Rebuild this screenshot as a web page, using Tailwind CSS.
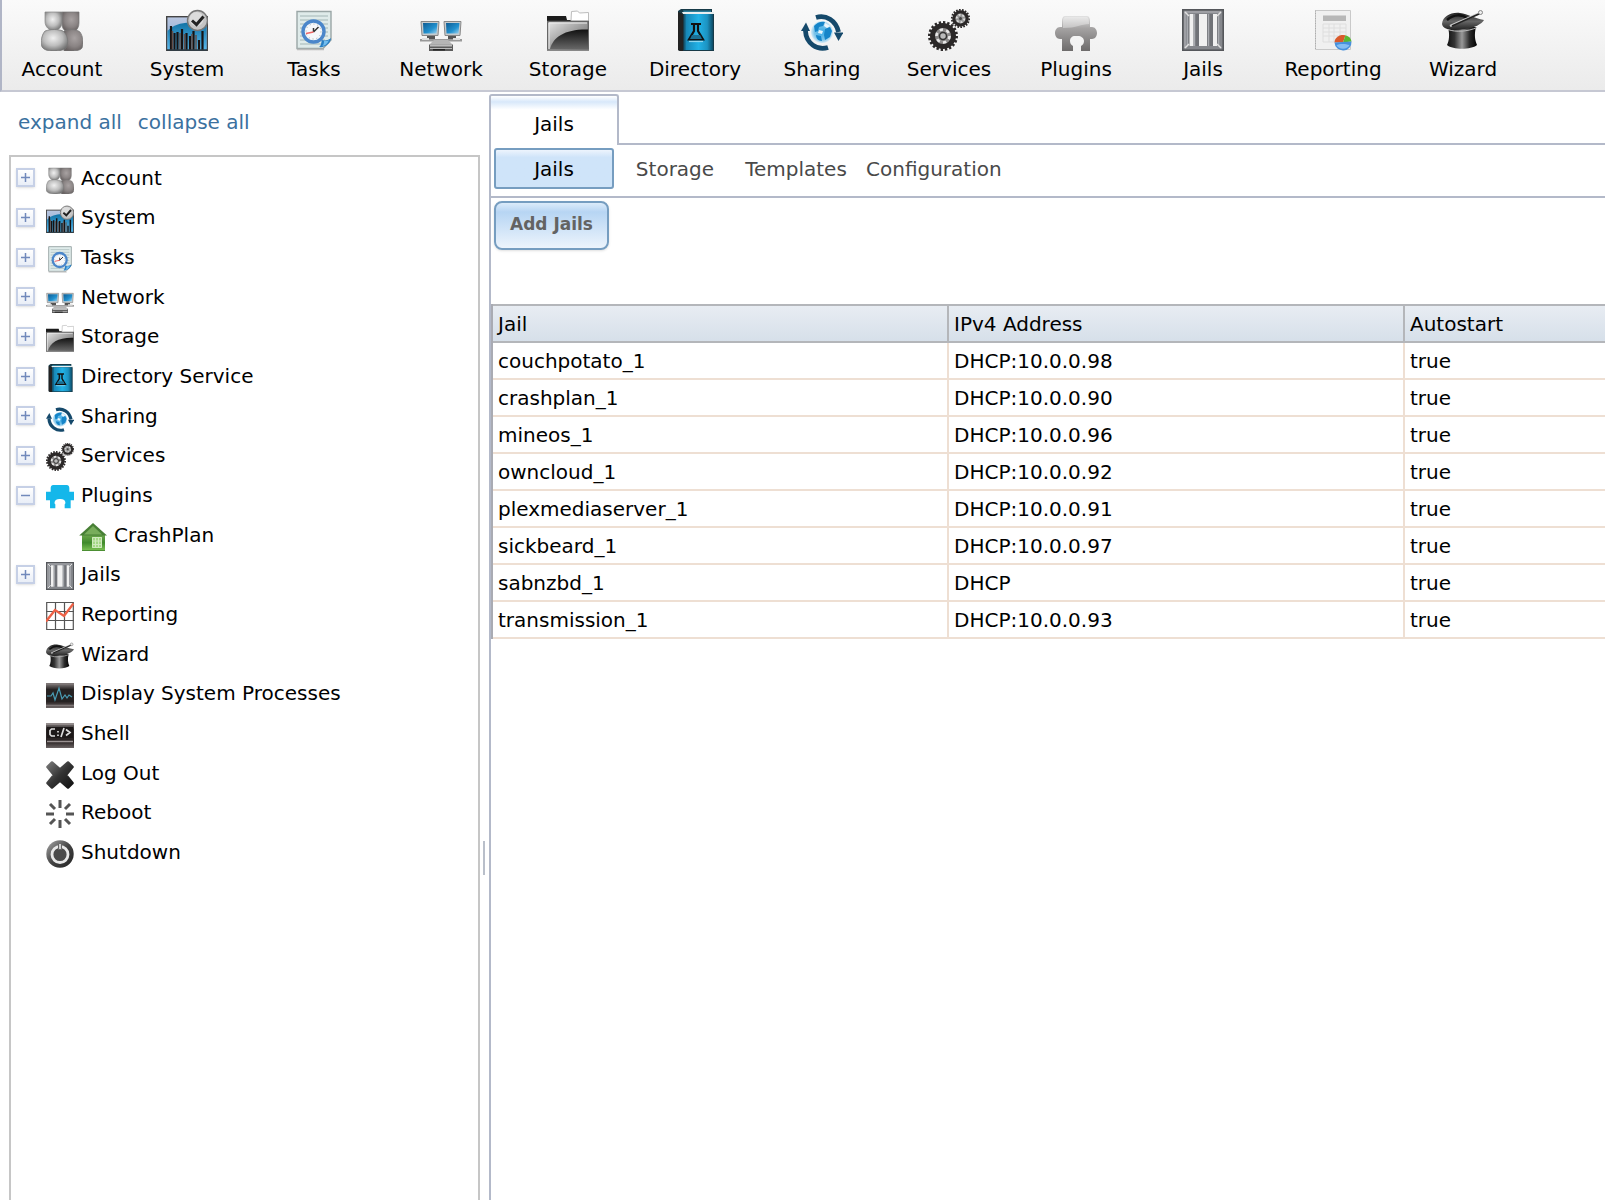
<!DOCTYPE html>
<html lang="en">
<head>
  <meta charset="UTF-8" />
  <meta name="viewport" content="width=device-width, initial-scale=1" />
  <title>Jails</title>
  <script src="https://cdn.jsdelivr.net/npm/@tailwindcss/browser@4"></script>
</head>
<body class="flex flex-col h-screen overflow-hidden bg-white text-black text-[20px] leading-6 font-['DejaVu_Sans',sans-serif]">

  <!-- Icon sprite -->
  <svg class="absolute w-0 h-0" aria-hidden="true">
    <defs>
      <radialGradient id="gLight" cx=".45" cy=".4" r=".65"><stop offset="0" stop-color="#f0f0f0"/><stop offset=".55" stop-color="#bdbdbd"/><stop offset="1" stop-color="#6e6e6e"/></radialGradient>
      <radialGradient id="gDark" cx=".55" cy=".4" r=".65"><stop offset="0" stop-color="#a8a2a2"/><stop offset=".6" stop-color="#8a8484"/><stop offset="1" stop-color="#666060"/></radialGradient>
      <linearGradient id="gSys" x1="0" y1="0" x2="0" y2="1"><stop offset="0" stop-color="#b9c6e0"/><stop offset="1" stop-color="#7fa6d4"/></linearGradient>
      <linearGradient id="gHill" x1="0" y1="0" x2="0" y2="1"><stop offset="0" stop-color="#1173a6"/><stop offset="1" stop-color="#58b8ec"/></linearGradient>
      <linearGradient id="gScreen" x1="0" y1="0" x2="1" y2="1"><stop offset="0" stop-color="#0e5c93"/><stop offset=".6" stop-color="#2191cf"/><stop offset="1" stop-color="#9fd4ef"/></linearGradient>
      <linearGradient id="gFolder" x1="0" y1="0" x2="1" y2="1"><stop offset="0" stop-color="#e6e6e6"/><stop offset="1" stop-color="#555"/></linearGradient>
      <linearGradient id="gFolderDark" x1="0" y1="0" x2="0" y2="1"><stop offset="0" stop-color="#111"/><stop offset="1" stop-color="#666"/></linearGradient>
      <linearGradient id="gBook" x1="0" y1="0" x2="1" y2="0"><stop offset="0" stop-color="#157fae"/><stop offset=".5" stop-color="#22b2e6"/><stop offset=".8" stop-color="#1c93c2"/><stop offset="1" stop-color="#0d4a64"/></linearGradient>
      <radialGradient id="gGlobe"><stop offset="0" stop-color="#35a9e6"/><stop offset=".7" stop-color="#7cc4ea"/><stop offset="1" stop-color="#d5eaf5"/></radialGradient>
      <linearGradient id="gPlug" x1="0" y1="0" x2="0" y2="1"><stop offset="0" stop-color="#e2e2e2"/><stop offset=".35" stop-color="#a5a3a3"/><stop offset="1" stop-color="#6d6b6b"/></linearGradient>
      <linearGradient id="gHat" x1="0" y1="0" x2="1" y2="0"><stop offset="0" stop-color="#111"/><stop offset=".25" stop-color="#333"/><stop offset=".5" stop-color="#999"/><stop offset=".75" stop-color="#2b2b2b"/><stop offset="1" stop-color="#000"/></linearGradient>
      <linearGradient id="gBrim" x1="0" y1="0" x2="0" y2="1"><stop offset="0" stop-color="#222"/><stop offset=".5" stop-color="#666"/><stop offset="1" stop-color="#222"/></linearGradient>
      <linearGradient id="gHouse" x1="0" y1="0" x2="0" y2="1"><stop offset="0" stop-color="#6aa54a"/><stop offset=".5" stop-color="#3f8a2b"/><stop offset="1" stop-color="#7cc254"/></linearGradient>
      <linearGradient id="gTerm" x1="0" y1="0" x2="0" y2="1"><stop offset="0" stop-color="#8a8484"/><stop offset=".25" stop-color="#2a2626"/><stop offset=".75" stop-color="#2b2424"/><stop offset="1" stop-color="#6b6464"/></linearGradient>
      <linearGradient id="gCross" x1="0" y1="0" x2="1" y2="1"><stop offset="0" stop-color="#777"/><stop offset=".5" stop-color="#333"/><stop offset="1" stop-color="#111"/></linearGradient>
      <linearGradient id="gPower" x1="0" y1="0" x2="1" y2="1"><stop offset="0" stop-color="#aaa"/><stop offset=".5" stop-color="#444"/><stop offset="1" stop-color="#222"/></linearGradient>
    </defs>

    <symbol id="account" viewBox="0 0 42 42">
      <path d="M21 3h17v11c0 4-2 7-4 8h-9c-3-1-4-4-4-8z" fill="url(#gDark)" stroke="#777" stroke-width=".7"/>
      <path d="M23 22c5-2 12-2 16 1 3 4 4 12 2 16-2 3-8 3-12 3h-6z" fill="url(#gDark)" stroke="#777" stroke-width=".7"/>
      <path d="M4 3h17v10c0 5-3 8-8 8.500s-9-4-9-9z" fill="url(#gLight)" stroke="#888" stroke-width=".7"/>
      <path d="M4 22c6-2 13-2 18 0 5 4 6 12 3 17-3 3-9 3-13 3-5 0-9-1-11-4-2-5 0-13 3-16z" fill="url(#gLight)" stroke="#777" stroke-width=".7"/>
    </symbol>

    <symbol id="system" viewBox="0 0 42 42">
      <rect x=".7" y="7.700" width="40.600" height="33.600" fill="url(#gSys)" stroke="#444" stroke-width="1.400"/>
      <path d="M1.500 22C10 13 24 12 40.500 16v25h-39z" fill="url(#gHill)"/>
      <path d="M5 17v24M8.500 24v17M11.500 23v18M16 20v21M20.500 24v17M24 27v14M27.500 22v19M33 31v10M36.500 22v19" stroke="#171313" stroke-width="2.200"/>
      <path d="M6.500 22v19M14 24v17M18.500 25v16M26 25v16M30 26v15" stroke="#64504b" stroke-width="1.500"/>
      <path d="M1 41h40" stroke="#2c3b44" stroke-width="1.600"/>
      <circle cx="31.500" cy="11.500" r="10" fill="#c4c4c4" stroke="#777" stroke-width="1.400"/>
      <circle cx="30.500" cy="10" r="7" fill="#dcdcdc"/>
      <path d="M26 11.500l4.500 4 7-8" fill="none" stroke="#222" stroke-width="3"/>
    </symbol>

    <symbol id="tasks" viewBox="0 0 42 42">
      <path d="M4 2.500h34V31l-8 8.500H4z" fill="#dfebea" stroke="#9aa6a6" stroke-width="1.400"/>
      <path d="M4 40.500h27" stroke="#bbb" stroke-width="1.500"/>
      <path d="M7 7h28M7 11h28M7 15h28M7 19h28M7 23h28M7 27h28M7 31h25M7 35h22" stroke="#a3b6b6"/>
      <circle cx="20.500" cy="22.500" r="10.500" fill="#f6f8fb" stroke="#4a86ca" stroke-width="3.400"/>
      <circle cx="20.500" cy="22.500" r="7.500" fill="none" stroke="#9aa" stroke-width="1" stroke-dasharray="1 2.900"/>
      <path d="M20.500 23l5-5M20.500 23v-4" stroke="#333" stroke-width="1.500"/>
      <path d="M13 24.500l7.500-1.500" stroke="#e66" stroke-width="1.500"/>
      <path d="M26 38c3-2 2-6 3-7 3 1 7 0 9-2 0 5-6 10-12 9z" fill="#2a7fc4"/>
      <path d="M29 37c2-1 2-4 2-5 2 0 4 0 5-1-1 3-4 6-7 6z" fill="#72bdee"/>
    </symbol>

    <symbol id="network" viewBox="0 0 42 42">
      <path d="M1 12.500h18l-1 14H2z" fill="#c7cbcd" stroke="#888"/>
      <path d="M3 14h14.500l-1 10.500H3.500z" fill="url(#gScreen)"/>
      <path d="M24 12.500h17l-1 14H25z" fill="#c7cbcd" stroke="#888"/>
      <path d="M26 14h13.500l-1 10.500H26.500z" fill="url(#gScreen)"/>
      <path d="M7 27h8v3H7zM28 27h8v3h-8z" fill="#555"/>
      <path d="M0 30h42v2.500H0z" fill="#999"/>
      <path d="M2 29h7v2H2zM33 29h7v2h-7z" fill="#ddd"/>
      <path d="M14 31h14l4 4H10z" fill="#b5b5b5"/>
      <path d="M9 35.500h24V42H9z" fill="#5c5c5c"/>
      <path d="M10 36h22v1.500H10zM10 39h22v1H10z" fill="#bbb"/>
      <path d="M13 40h12v1.500H13z" fill="#222"/>
    </symbol>

    <symbol id="storage" viewBox="0 0 42 42">
      <path d="M0 7h19l1 4h22v4H0z" fill="#1b1b1b"/>
      <path d="M24 12l.5-9.500 6-.5 2 2 9-.5V12z" fill="#fff" stroke="#bdbdbd"/>
      <path d="M.7 12.500h40.600v28.800H.7z" fill="url(#gFolder)" stroke="#666" stroke-width="1.400"/>
      <path d="M3 40C6 28 18 20 41 20.500V40z" fill="url(#gFolderDark)"/>
      <path d="M2 40V14h38" fill="none" stroke="#eee"/>
      <path d="M0 41.200h42" stroke="#888" stroke-width="1.500"/>
    </symbol>

    <symbol id="directory" viewBox="0 0 42 42">
      <path d="M4 2l3-2h31v3l2 2v37H6l-2-1z" fill="#173a48"/>
      <path d="M9 1.500h28V4H10z" fill="#2d7c98"/>
      <path d="M8 3h32v2H9z" fill="#e8eef0"/>
      <path d="M10 5h29v36H10z" fill="url(#gBook)"/>
      <path d="M4 3l5 2v37H6l-2-1z" fill="#222"/>
      <path d="M10 5h1.500v36H10z" fill="#155a76"/>
      <path d="M17 15h10M20 15v7l-5 8.500h14L24 22v-7" fill="none" stroke="#111" stroke-width="2.200"/>
      <path d="M18 26h8l2 4H16z" fill="#1b6f92"/>
      <path d="M15 32.500h14" stroke="#8fd6ee" stroke-width="1.200"/>
    </symbol>

    <symbol id="sharing" viewBox="0 0 42 42">
      <circle cx="21" cy="23" r="11" fill="url(#gGlobe)"/>
      <path d="M13 17c3-4 8-5 11-4l-2 4-4 1-1 4-3 1zM24 20l5-2 2 4-2 6-5 3-1-5zM15 26l5 1 1 5c-4 0-6-3-6-6z" fill="#1685c9"/>
      <path d="M24 14l5 3-3 2-3-2zM18 21l4 1-1 3-4-1z" fill="#eaf6fd"/>
      <path d="M15 8.500c10-3 20 3 22.500 14.500" fill="none" stroke="#15496b" stroke-width="4.800"/>
      <path d="M33 23.500h9.500L37.500 32z" fill="#15496b"/>
      <path d="M27 38.500C16 42 5 34 4.500 22" fill="none" stroke="#15496b" stroke-width="4.800"/>
      <path d="M0 22h9L5 13.500z" fill="#15496b"/>
    </symbol>

    <symbol id="services" viewBox="0 0 42 42">
      <circle cx="15" cy="27" r="13.600" fill="none" stroke="#2b2828" stroke-width="2.800" pathLength="40" stroke-dasharray="1.100 .9"/>
      <circle cx="15" cy="27" r="10.500" fill="#8c8a8a" stroke="#2b2828" stroke-width="5"/>
      <circle cx="15" cy="27" r="3.500" fill="#bbb" stroke="#333" stroke-width="1.500"/>
      <circle cx="15" cy="27" r="6.500" fill="none" stroke="#e8e8e8" stroke-width="2.600" pathLength="12" stroke-dasharray="1 1"/>
      <circle cx="32.500" cy="9.500" r="8.700" fill="none" stroke="#2b2828" stroke-width="1.800" pathLength="36" stroke-dasharray="1.100 .9"/>
      <circle cx="32.500" cy="9.500" r="6.700" fill="#999" stroke="#2b2828" stroke-width="3.200"/>
      <circle cx="32.500" cy="9.500" r="3.800" fill="none" stroke="#ddd" stroke-width="1.800" pathLength="12" stroke-dasharray="1 1"/>
      <circle cx="32.500" cy="9.500" r="1.500" fill="#444"/>
    </symbol>

    <symbol id="plugins" viewBox="0 0 42 42">
      <path d="M10 7h22c2 0 3 2 3 5v6h2c3 0 5 3 5 6s-2 6-5 6h-2v12h-9v-5c2-1 3-3 3-5 0-3-3-5-6-5h-3c-3 0-5 2-5 5 0 2 1 4 3 5v5H7V30H5c-3 0-5-3-5-6s2-6 5-6h2v-6c0-3 1-5 3-5z" fill="url(#gPlug)"/>
      <path d="M10 8h22c2 1 2 4 2 7-8 0-12 4-26 4v-6c0-3 0-4 2-5z" fill="#fff" fill-opacity=".35"/>
    </symbol>

    <symbol id="plugins-on" viewBox="0 0 42 42">
      <path d="M11 3h20c3 0 4 2 4 5v5h7v13h-5v12h-9v-6c2-1 2-8-6-8h-2c-8 0-8 7-6 8v6H6V26H0V13h7V8c0-3 1-5 4-5z" fill="#15b7ea"/>
    </symbol>

    <symbol id="jails" viewBox="0 0 42 42">
      <rect x=".8" y=".8" width="40.400" height="40.400" fill="#85878c" stroke="#55575b" stroke-width="1.600"/>
      <path d="M5 5h32v32H5z" fill="#707277"/>
      <path d="M7.500 5v32h4V5zM17 5v32h8V5zM31 5v32h4V5z" fill="#f0f0f0"/>
      <path d="M12.500 5v32M26.500 5v32M5.500 5v32M36.500 5v32" stroke="#a9abb0" stroke-width="1.500"/>
      <path d="M3 39V3h36" fill="none" stroke="#a6a8ac" stroke-width="1.500"/>
      <path d="M3 39l4-4M39 39l-4-4M3 3l4 4M39 3l-4 4" stroke="#e0e0e0" stroke-width="1.500"/>
    </symbol>

    <symbol id="reporting" viewBox="0 0 42 42">
      <path d="M3.500 1.500h35v39h-35z" fill="#f0f0f0" stroke="#c9c9c9"/>
      <path d="M3.500 1.500v39" stroke="#aaa" stroke-dasharray="1 1.500"/>
      <path d="M11 6.500h23V12H11z" fill="#b7b7b7"/>
      <path d="M11 15h23v18H11zM11 19h23M11 23h23M11 27h23M17 15v18M22 15v18M28 15v18" fill="none" stroke="#dedede"/>
      <path d="M31 33.500h-8.500a8.500 7.500 0 0 1 11-7.200z" fill="#d95a2b"/>
      <path d="M31 33.500l2.500-7.200a8.500 7.500 0 0 1 6 6.200z" fill="#58b833"/>
      <path d="M22.500 33.500l17-1a8.500 8.500 0 0 1-17 1z" fill="#4690dc"/>
      <path d="M24.500 36c3-1.500 9-1.500 13 0-2 5-11 5-13 0z" fill="#84bdf2"/>
    </symbol>

    <symbol id="wizard" viewBox="0 0 42 42">
      <path d="M6 18c2 8 1 14-1 18 6 5 24 5 30 0-2-5-3-10-1-18z" fill="url(#gHat)"/>
      <path d="M0 15C1 7 9 3 18 4c8 1 14 5 24 7-2 4-10 8-19 9-12 2-22 1-23-5z" fill="url(#gBrim)"/>
      <path d="M5 11c7-6 15-6 21-1" fill="none" stroke="#111" stroke-width="2.500"/>
      <path d="M6 20.500c8 3 20 2 29-2" fill="none" stroke="#bbb"/>
      <path d="M8 17L38 4" stroke="#ccc" stroke-width="2.400"/>
      <path d="M10 17L38 4.500" stroke="#222" stroke-width="1.800"/>
      <circle cx="38.500" cy="3.500" r="2" fill="#eee" stroke="#888"/>
    </symbol>

    <symbol id="house" viewBox="0 0 28 28">
      <path d="M3 12h23v15.500H3z" fill="url(#gHouse)"/>
      <path d="M14 0l14 12.500H.2z" fill="#477f35"/>
      <path d="M14 3l9 8.500H5z" fill="#78ad5b"/>
      <path d="M3 27.500h23" stroke="#4c8f33"/>
      <path d="M13 14h10v11H13z" fill="#a3d884"/>
      <path d="M13.500 14.500h9v10h-9zM16.500 14v11M19.500 14v11M13 18h10M13 21.500h10" fill="none" stroke="#cfe9bd"/>
    </symbol>

    <symbol id="chart" viewBox="0 0 28 28">
      <path d="M.7.500h26.600v27H.7zM9.500 0v28M18.500 0v28M0 9.500h28M0 18.500h28" fill="#fff" stroke="#555" stroke-width="1.200"/>
      <path d="M0 19.500L9 8l9 6L27.500 1.500" fill="none" stroke="#ee6146" stroke-width="2.400"/>
    </symbol>

    <symbol id="processes" viewBox="0 0 28 28">
      <path d="M0 2h28v25H0z" fill="url(#gTerm)"/>
      <path d="M0 3h28M0 24.500h28" stroke="#7d7676" stroke-width="1.500"/>
      <path d="M1 8h26v13H1z" fill="#252222"/>
      <path d="M1 15h4l2-3 2 7 4-12 3 11 3-4 2 3 2-3 3 2" fill="none" stroke="#4a9db5" stroke-width="1.200"/>
    </symbol>

    <symbol id="shell" viewBox="0 0 28 28">
      <path d="M0 2h28v25H0z" fill="url(#gTerm)"/>
      <path d="M1 6h26v11H1z" fill="#1d1919"/>
      <path d="M0 3h28M1 20.500h26" stroke="#9a9292" stroke-width="1.500"/>
      <path d="M9 8H5.500L4 9.500v4L5.500 15H9M12 10v1.500M12 13.500V15M18 7l-3 9M20 8.500l4 3-4 3" fill="none" stroke="#ddd" stroke-width="1.700"/>
    </symbol>

    <symbol id="logout" viewBox="0 0 28 28">
      <path d="M6 1.500l8 7 8-7 4.500 4.500-6.500 8 6.500 8-4.500 4.500-8-7-8 7L1.500 22 8 14 1.500 6z" fill="url(#gCross)" stroke="url(#gCross)" stroke-width="2.600" stroke-linejoin="round"/>
    </symbol>

    <symbol id="reboot" viewBox="0 0 28 28">
      <path d="M14 0v8M14 20v8M0 14h8M20 14h8M4 4l5 5M24 4l-5 5M4 24l5-5M24 24l-5-5" stroke="#555" stroke-width="3"/>
    </symbol>

    <symbol id="shutdown" viewBox="0 0 28 28">
      <circle cx="14" cy="14" r="13.700" fill="url(#gPower)"/>
      <circle cx="14" cy="14.500" r="8" fill="#4a4a4a" stroke="#e8e8e8" stroke-width="2.800"/>
      <path d="M14 4v6" stroke="#666" stroke-width="4"/>
      <path d="M14 4v5" stroke="#ddd" stroke-width="1.800"/>
    </symbol>

    <symbol id="plus" viewBox="0 0 9 9"><path d="M4.500 0v9M0 4.500h9" stroke="#7189bb" stroke-width="1.500"/></symbol>
    <symbol id="minus" viewBox="0 0 9 9"><path d="M0 4.500h9" stroke="#7189bb" stroke-width="1.500"/></symbol>
  </svg>

  <!-- Toolbar -->
  <nav class="flex shrink-0 gap-[3px] h-[92px] pt-[9px] border-l-2 border-b-2 border-l-[#b0b5c6] border-b-[#c6c8d3] bg-linear-to-b from-[#fafafa] to-[#ebebeb]">
    <button class="flex flex-col items-center gap-1.5 w-[120px] shrink-0"><svg class="size-[42px]"><use href="#account"/></svg>Account</button>
    <button class="flex flex-col items-center gap-1.5 w-[124px] shrink-0"><svg class="size-[42px]"><use href="#system"/></svg>System</button>
    <button class="flex flex-col items-center gap-1.5 w-[124px] shrink-0"><svg class="size-[42px]"><use href="#tasks"/></svg>Tasks</button>
    <button class="flex flex-col items-center gap-1.5 w-[124px] shrink-0"><svg class="size-[42px]"><use href="#network"/></svg>Network</button>
    <button class="flex flex-col items-center gap-1.5 w-[124px] shrink-0"><svg class="size-[42px]"><use href="#storage"/></svg>Storage</button>
    <button class="flex flex-col items-center gap-1.5 w-[124px] shrink-0"><svg class="size-[42px]"><use href="#directory"/></svg>Directory</button>
    <button class="flex flex-col items-center gap-1.5 w-[124px] shrink-0"><svg class="size-[42px]"><use href="#sharing"/></svg>Sharing</button>
    <button class="flex flex-col items-center gap-1.5 w-[124px] shrink-0"><svg class="size-[42px]"><use href="#services"/></svg>Services</button>
    <button class="flex flex-col items-center gap-1.5 w-[124px] shrink-0"><svg class="size-[42px]"><use href="#plugins"/></svg>Plugins</button>
    <button class="flex flex-col items-center gap-1.5 w-[124px] shrink-0"><svg class="size-[42px]"><use href="#jails"/></svg>Jails</button>
    <button class="flex flex-col items-center gap-1.5 w-[130px] shrink-0"><svg class="size-[42px]"><use href="#reporting"/></svg>Reporting</button>
    <button class="flex flex-col items-center gap-1.5 w-[124px] shrink-0"><svg class="size-[42px]"><use href="#wizard"/></svg>Wizard</button>
  </nav>

  <div class="flex flex-1 min-h-0">
    <!-- Tree -->
    <aside class="flex flex-col w-[480px] shrink-0 pl-[9px]">
      <div class="flex gap-4 pl-[9px] pt-[18px] pb-[21px] text-[#3b719f]">
        <a href="#">expand all</a>
        <a href="#">collapse all</a>
      </div>
      <div class="flex-1 border-2 border-b-0 border-[#c6c6c6]">
        <ul id="tree" class="grid auto-rows-fr h-[715px] pt-px pl-[5px]"></ul>
      </div>
    </aside>

    <!-- Splitter -->
    <div class="w-[9px] shrink-0 pl-[3px] pt-[749px]">
      <div class="h-[34px] w-0.5 bg-[#b9bfca]"></div>
    </div>

    <!-- Content -->
    <main class="flex flex-col flex-1 min-w-0 pt-0.5">
      <div class="flex">
        <button class="w-[130px] h-[51px] pt-1.5 border-2 border-b-0 border-[#b3b9c9] rounded-t-[3px] bg-linear-to-b from-white via-[#d8e8fa] via-12% to-white to-28%">Jails</button>
        <div class="flex-1 border-b-2 border-[#b3b9c9]"></div>
      </div>
      <div class="flex flex-col flex-1 border-l-2 border-[#b3b9c9]">
        <div class="flex gap-px h-[53px] pt-[3px] pl-[3px] border-b-2 border-[#b3b9c9] text-[#494949]">
          <button class="min-w-[120px] h-[41px] px-[9px] border-2 border-[#769dc0] rounded-[3px] text-black bg-linear-to-b from-[#edf4fd] via-[#cfe4f9] via-20% to-[#cfe4f9]">Jails</button>
          <button class="min-w-[120px] h-[41px] px-[9px]">Storage</button>
          <button class="min-w-[120px] h-[41px] px-[9px]">Templates</button>
          <button class="min-w-[120px] h-[41px] px-[9px]">Configuration</button>
        </div>
        <div class="h-[106px] pt-[3px] pl-[3px]">
          <button class="h-[49px] px-3.5 pb-1 border-2 border-[#769dc0] rounded-lg shadow-sm text-[17px] font-bold text-[#636363] bg-linear-to-b from-[#dcebfa] via-[#b7d5f3] via-20% to-[#edf4fc]">Add Jails</button>
        </div>
        <table class="w-full table-fixed border-separate border-spacing-0 border-l-2 border-[#a9abb3] text-left">
          <colgroup><col class="w-[456px]" /><col class="w-[456px]" /><col /></colgroup>
          <thead>
            <tr class="h-[39px] bg-linear-to-b from-[#e9edf3] to-[#d5dfe9]">
              <th class="px-[5px] py-0 font-normal border-y-2 border-r-2 border-[#b4b6ba]">Jail</th>
              <th class="px-[5px] py-0 font-normal border-y-2 border-r-2 border-[#b4b6ba]">IPv4 Address</th>
              <th class="px-[5px] py-0 font-normal border-y-2 border-[#b4b6ba]">Autostart</th>
            </tr>
          </thead>
          <tbody id="jailRows"></tbody>
        </table>
      </div>
    </main>
  </div>

  <script>
    // [label, icon, expander, nested]
    const nodes = [
      ["Account", "account", "plus"],
      ["System", "system", "plus"],
      ["Tasks", "tasks", "plus"],
      ["Network", "network", "plus"],
      ["Storage", "storage", "plus"],
      ["Directory Service", "directory", "plus"],
      ["Sharing", "sharing", "plus"],
      ["Services", "services", "plus"],
      ["Plugins", "plugins-on", "minus"],
      ["CrashPlan", "house", "", true],
      ["Jails", "jails", "plus"],
      ["Reporting", "chart", ""],
      ["Wizard", "wizard", ""],
      ["Display System Processes", "processes", ""],
      ["Shell", "shell", ""],
      ["Log Out", "logout", ""],
      ["Reboot", "reboot", ""],
      ["Shutdown", "shutdown", ""]
    ];

    const jails = [
      ["couchpotato_1", "DHCP:10.0.0.98"],
      ["crashplan_1", "DHCP:10.0.0.90"],
      ["mineos_1", "DHCP:10.0.0.96"],
      ["owncloud_1", "DHCP:10.0.0.92"],
      ["plexmediaserver_1", "DHCP:10.0.0.91"],
      ["sickbeard_1", "DHCP:10.0.0.97"],
      ["sabnzbd_1", "DHCP"],
      ["transmission_1", "DHCP:10.0.0.93"]
    ];

    document.getElementById("tree").innerHTML = nodes.map(([label, icon, expander, nested]) => `
      <li class="flex items-center ${nested ? "pl-[33px]" : ""}">
        ${expander
          ? `<button aria-label="Toggle ${label}" class="flex items-center justify-center size-[19px] mr-[11px] border-2 border-[#c6d0e6] bg-linear-to-b from-white to-[#e9eef7] shadow-sm"><svg class="size-[9px]"><use href="#${expander}"/></svg></button>`
          : `<span class="w-[30px]"></span>`}
        <a href="#" class="flex items-center gap-[7px]"><svg class="size-7 mt-1"><use href="#${icon}"/></svg>${label}</a>
      </li>`).join("");

    document.getElementById("jailRows").innerHTML = jails.map(([name, address]) => `
      <tr class="h-[37px]">
        <td class="px-[5px] py-0 border-b-2 border-r-2 border-[#eedfd3]">${name}</td>
        <td class="px-[5px] py-0 border-b-2 border-r-2 border-[#eedfd3]">${address}</td>
        <td class="px-[5px] py-0 border-b-2 border-[#eedfd3]">true</td>
      </tr>`).join("");
  </script>
</body>
</html>
